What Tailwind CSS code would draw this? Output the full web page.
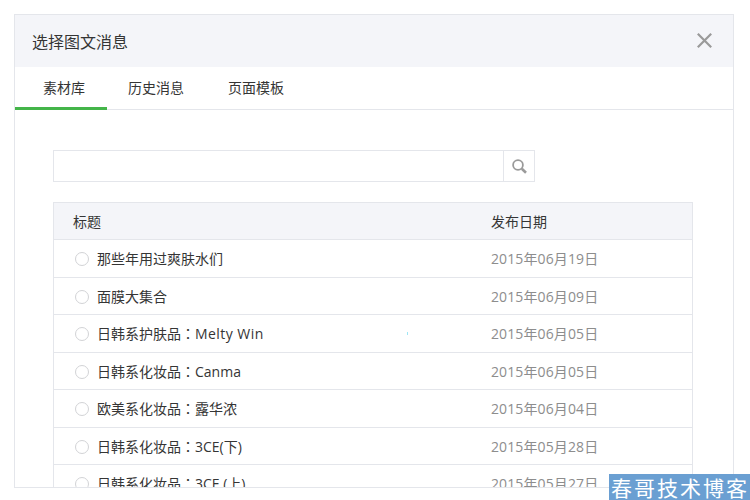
<!DOCTYPE html>
<html lang="zh-CN">
<head>
    <meta charset="UTF-8">
    <title>选择图文消息</title>
    <script src="https://cdn.jsdelivr.net/npm/@tailwindcss/browser@4"></script>
</head>
<body class="bg-white w-[750px] h-[500px] overflow-hidden relative font-['Open_Sans','Noto_Sans_CJK_SC',sans-serif] text-[14px] text-[#353535]">
    <div class="ml-[14px] mt-[14px] w-[720px] h-[474px] border border-[#e4e6eb] overflow-hidden">
        <!-- header -->
        <div class="h-[52px] bg-[#f4f5f9] flex items-center justify-between pl-[17px] pr-[21px]">
            <h3 class="text-[16px] pt-[2px]">选择图文消息</h3>
            <svg class="w-[15px] h-[15px] mb-[1px]" viewBox="0 0 15 15" fill="none" stroke="#9a9a9a" stroke-width="2.2"><path d="M0.8 0.8L14.2 14.2M14.2 0.8L0.8 14.2"/></svg>
        </div>

        <!-- tabs -->
        <div class="h-[43px] flex border-b border-[#e4e6eb]">
            <a class="h-[43px] pl-[28px] pr-[22px] leading-[41px] border-b-[3px] border-[#44b549]">素材库</a>
            <a class="h-[42px] pl-[21px] pr-[22px] leading-[41px]">历史消息</a>
            <a class="h-[42px] pl-[22px] pr-[22px] leading-[41px]">页面模板</a>
        </div>

        <div class="pt-[40px] pl-[38px]">
            <!-- search -->
            <div class="w-[482px] h-[32px] flex border border-[#e4e6eb]">
                <div class="flex-1"></div>
                <div class="w-[31px] border-l border-[#e4e6eb] flex items-center justify-center">
                    <svg class="w-[15px] h-[15px]" viewBox="0 0 15 15" fill="none" stroke="#9a9a9a"><circle cx="6" cy="6" r="4.9" stroke-width="1.8"/><path d="M9.8 9.8L14 13.8" stroke-width="2.6"/></svg>
                </div>
            </div>

            <!-- table -->
            <div id="list" class="relative mt-[20px] w-[640px] border-x border-t border-[#e4e6eb]">
                <div class="h-[37px] bg-[#f4f5f9] border-b border-[#e4e6eb] flex items-center">
                    <div class="w-[437px] pl-[19px]">标题</div>
                    <div>发布日期</div>
                </div>
                <div class="h-[37.5px] border-b border-[#e4e6eb] flex items-center">
                    <div class="w-[437px] pl-[21px] flex items-center"><span class="w-[14px] h-[14px] rounded-full border border-[#d2d3d6] mr-[8px] mt-[2px]"></span>那些年用过爽肤水们</div>
                    <div class="text-[#8d8d8d] tracking-[0.12px]">2015年06月19日</div>
                </div>
                <div class="h-[37.5px] border-b border-[#e4e6eb] flex items-center pt-[1px]">
                    <div class="w-[437px] pl-[21px] flex items-center"><span class="w-[14px] h-[14px] rounded-full border border-[#d2d3d6] mr-[8px] mt-[1px]"></span>面膜大集合</div>
                    <div class="text-[#8d8d8d] tracking-[0.12px]">2015年06月09日</div>
                </div>
                <div class="relative h-[37.5px] border-b border-[#e4e6eb] flex items-center">
                    <div class="w-[437px] pl-[21px] flex items-center"><span class="w-[14px] h-[14px] rounded-full border border-[#d2d3d6] mr-[8px] mt-[2px]"></span>日韩系护肤品<span class="font-['Noto_Sans_CJK_TC']">：</span><span class="tracking-[0.45px]">Melty Win</span></div>
                    <div class="text-[#8d8d8d] tracking-[0.12px]">2015年06月05日</div>
                    <span class="absolute left-[353px] top-[17px] w-px h-[3px] bg-[#9fe6f5]"></span>
                </div>
                <div class="h-[37.5px] border-b border-[#e4e6eb] flex items-center pt-[1px]">
                    <div class="w-[437px] pl-[21px] flex items-center"><span class="w-[14px] h-[14px] rounded-full border border-[#d2d3d6] mr-[8px] mt-[1px]"></span>日韩系化妆品<span class="font-['Noto_Sans_CJK_TC']">：</span>Canma</div>
                    <div class="text-[#8d8d8d] tracking-[0.12px]">2015年06月05日</div>
                </div>
                <div class="h-[37.5px] border-b border-[#e4e6eb] flex items-center">
                    <div class="w-[437px] pl-[21px] flex items-center"><span class="w-[14px] h-[14px] rounded-full border border-[#d2d3d6] mr-[8px] mt-[2px]"></span>欧美系化妆品<span class="font-['Noto_Sans_CJK_TC']">：</span>露华浓</div>
                    <div class="text-[#8d8d8d] tracking-[0.12px]">2015年06月04日</div>
                </div>
                <div class="h-[37.5px] border-b border-[#e4e6eb] flex items-center pt-[1px]">
                    <div class="w-[437px] pl-[21px] flex items-center"><span class="w-[14px] h-[14px] rounded-full border border-[#d2d3d6] mr-[8px] mt-[1px]"></span>日韩系化妆品<span class="font-['Noto_Sans_CJK_TC']">：</span>3CE(下)</div>
                    <div class="text-[#8d8d8d] tracking-[0.12px]">2015年05月28日</div>
                </div>
                <div class="h-[37.5px] border-b border-[#e4e6eb] flex items-center">
                    <div class="w-[437px] pl-[21px] flex items-center"><span class="w-[14px] h-[14px] rounded-full border border-[#d2d3d6] mr-[8px] mt-[2px]"></span>日韩系化妆品<span class="font-['Noto_Sans_CJK_TC']">：</span>3CE (上)</div>
                    <div class="text-[#8d8d8d] tracking-[0.12px]">2015年05月27日</div>
                </div>
            </div>
        </div>
    </div>

    <!-- watermark -->
    <div class="absolute right-0 bottom-0 w-[141px] h-[26px] bg-[#6a9fd2] text-white text-[21px] leading-[26px] tracking-[2px] whitespace-nowrap pl-[2px] font-['Noto_Sans_CJK_SC',serif]">春哥技术博客</div>
</body>
</html>
